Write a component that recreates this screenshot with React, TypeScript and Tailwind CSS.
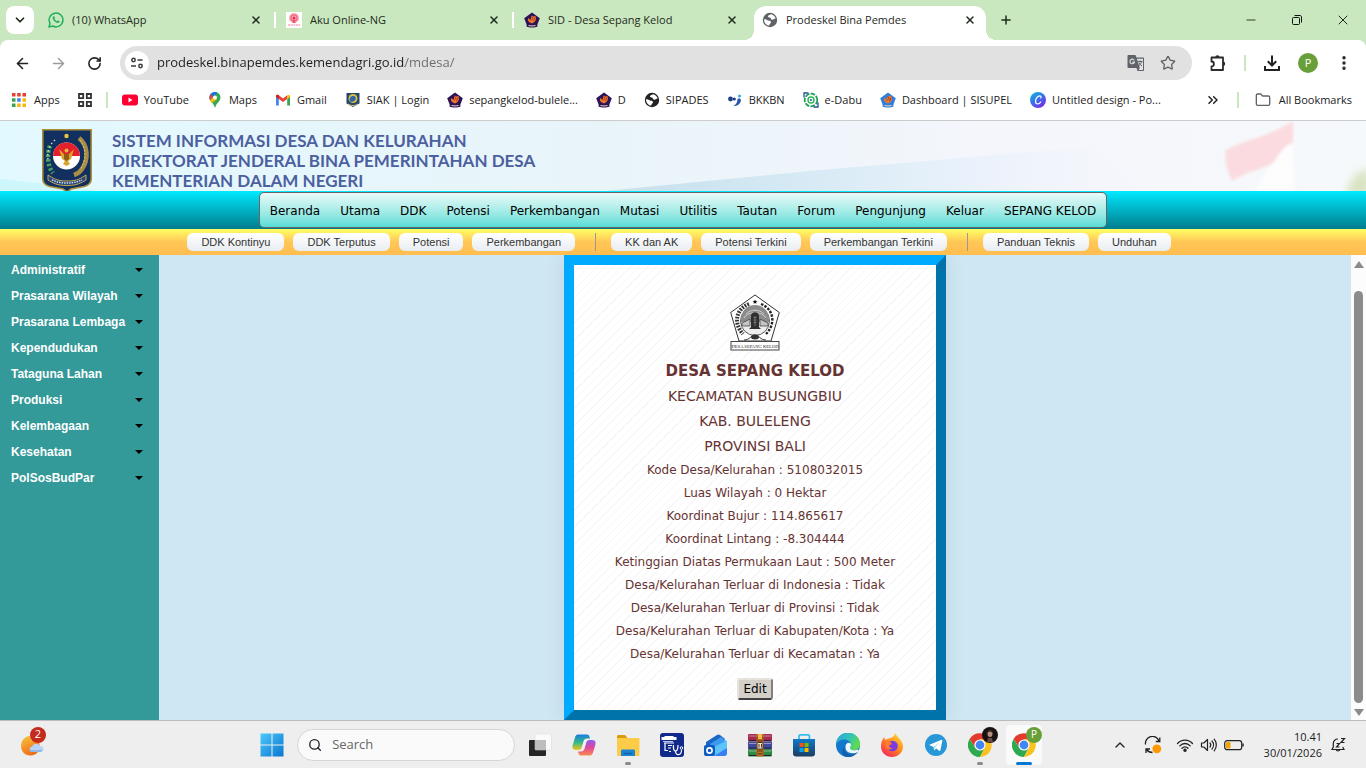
import type { ReactNode } from 'react';
import {
  ArrowLeft,
  ArrowRight,
  ChevronDown,
  ChevronUp,
  ChevronsRight,
  EllipsisVertical,
  Folder,
  Minus,
  Plus,
  RotateCw,
  Search,
  Star,
  X,
} from 'lucide-react';

/* ---------- Icons ---------- */

const WhatsAppIcon = () => (
  <svg viewBox="0 0 16 16" className="h-4 w-4 shrink-0">
    <path d="M1 15l1-3.700A6.900 6.900 0 1 1 4.700 14z" fill="none" stroke="#22b15c" strokeWidth="1.500" strokeLinejoin="round" />
    <path d="M5.500 4.300c.4-.2.8-.1 1 .4l.4 1c.1.3 0 .5-.5 1 .6 1.200 1.500 2 2.700 2.500.6-.7.8-.9 1.100-.8l1.200.6c.4.200.3.5.2.8-.3.900-1.400 1.300-2.200 1.100C7 10.300 5.300 8.500 4.700 6.600c-.2-.9.200-1.900.8-2.300z" fill="#22b15c" />
  </svg>
);

const RadioIcon = () => (
  <svg viewBox="0 0 16 16" className="h-4 w-4 shrink-0">
    <rect width="16" height="16" fill="#fff" />
    <circle cx="8" cy="6" r="5" fill="#f9a8b8" />
    <circle cx="8" cy="6" r="3.200" fill="none" stroke="#f0566f" />
    <circle cx="8" cy="6" r="1.500" fill="#e8334f" />
    <path d="M7.300 7h1.400l.8 4h-3z" fill="#f0566f" />
    <path d="M2 13h12" stroke="#f9a8b8" strokeWidth="1.500" strokeDasharray="2 .6" />
  </svg>
);

const RegencyIcon = ({ fill = '#2c1256' }: { fill?: string }) => (
  <svg viewBox="0 0 16 16" className="h-4 w-4 shrink-0">
    <path d="M8 .5L15.800 6.300 13.200 13H2.800L.2 6.300z" fill={fill} />
    <path d="M4.500 6L6.500 8l1-4.500 2 1L11.500 4l.5 3.500-1.500 2.500L8 11.500 5 10 3.800 8z" fill="#f0782a" />
    <path d="M7.500 4l1.300 2.500-1.800 2M11 5.500L9.500 9" stroke="#b5321b" fill="none" />
    <path d="M3 11.500c2 1.500 8 1.500 10 0l.5 3c-3 1.300-8 1.300-11 0z" fill={fill} />
    <path d="M4.500 13.500c2 .6 5 .6 7 0" stroke="#f6d9c4" strokeWidth="1" fill="none" />
  </svg>
);

const GlobeIcon = ({ fill }: { fill: string }) => (
  <svg viewBox="0 0 16 16" className="h-4 w-4 shrink-0">
    <circle cx="8" cy="8" r="7.200" fill={fill} />
    <path d="M2 7.500C3.500 7 4.700 8 6 8.500c1.300.4 2.600.1 3 1.500.3 1.300-1.600 1.500-1.700 3.300-.1.600-1.600.2-2.600-.6C3 11.500 2 9.500 2 7.500z" fill="#fff" />
    <path d="M9 2.300c-1.300.9-3.300.9-3.100 2.300.2 1 1.700.6 2.400 1.200.8.7.6 1.800 2 1.900 1.500.100 1.900-1.200 3.400-1.100C13 4.300 11.300 2.600 9 2.300z" fill="#fff" />
  </svg>
);

const AppsIcon = () => (
  <svg viewBox="0 0 14 14" className="h-3.5 w-3.5 shrink-0">
    <path d="M0 0h3.500v3.500H0zM5.200 0h3.500v3.500H5.200zM10.500 0H14v3.500h-3.500z" fill="#e8402f" />
    <path d="M0 5.200h3.500v3.500H0zM0 10.500h3.500V14H0z" fill="#35a452" />
    <path d="M5.200 5.200h3.500v3.500H5.200z" fill="#3d7ff0" />
    <path d="M10.500 5.200H14v3.500h-3.500zM5.200 10.500h3.500V14H5.200zM10.500 10.500H14V14h-3.500z" fill="#f8b90c" />
  </svg>
);

const TabGroupIcon = () => (
  <svg viewBox="0 0 14 14" className="h-3.5 w-3.5" fill="none" stroke="#333" strokeWidth="1.800">
    <path d="M1 1h4.200v4.200H1zM8.800 1H13v4.200H8.800zM1 8.800h4.200V13H1zM8.800 8.800H13V13H8.800z" />
  </svg>
);

const YouTubeIcon = () => (
  <svg viewBox="0 0 16 16" className="h-4 w-4 shrink-0">
    <rect y="2.500" width="16" height="11" rx="3" fill="#ff0033" />
    <path d="M6.500 5.600l4 2.400-4 2.400z" fill="#fff" />
  </svg>
);

const MapsIcon = () => (
  <svg viewBox="0 0 16 16" className="h-4 w-4 shrink-0">
    <path d="M8 0c3.100 0 5.500 2.400 5.500 5.500C13.500 9.500 9.500 10.500 8 16c-1.500-5.500-5.500-6.500-5.500-10.500C2.500 2.400 4.900 0 8 0z" fill="#34a853" />
    <path d="M3 8.200L10.500 .600C9.700.200 8.900 0 8 0 4.900 0 2.500 2.400 2.500 5.500c0 1 .2 1.900.5 2.700z" fill="#1a73e8" />
    <path d="M3.600 2.200l2.600 2L3 8.200C2.300 6.500 2.300 3.900 3.600 2.200z" fill="#ea4335" />
    <path d="M10 7.200L4.800 11.100C4 10.100 3.400 9.200 3 8.200l3.300-3.500z" fill="#fbbc04" />
    <circle cx="8" cy="5.500" r="2" fill="#fff" />
  </svg>
);

const GmailIcon = () => (
  <svg viewBox="0 0 16 16" className="h-4 w-4 shrink-0">
    <path d="M1 4v9.500h2.800V7z" fill="#4285f4" />
    <path d="M15 4v9.500h-2.800V7z" fill="#34a853" />
    <path d="M1 4.300l2.800 2.600L8 10l4.200-3.100V3.300L8 6.500 3.800 3.300C2.600 2.300 1 3 1 4.300z" fill="#ea4335" />
    <path d="M12.200 3.300v3.900L15 5V4.300c0-1.500-1.600-2-2.800-1z" fill="#fbbc04" />
    <path d="M1 4.300V5l2.800 2.200V3.300C2.600 2.300 1 2.800 1 4.300z" fill="#c5221f" />
  </svg>
);

const SiakIcon = () => (
  <svg viewBox="0 0 16 16" className="h-4 w-4 shrink-0">
    <path d="M1.500 1h13v10.500L8 15l-6.500-3.500z" fill="#24456e" />
    <circle cx="8" cy="6.500" r="4.500" fill="#e3c33c" />
    <path d="M4.500 7c1-3 4-4 5.500-2.500s1 4-1.500 5-4 0-4-2.500z" fill="#2f66a8" />
    <path d="M3 12c3 2 7 2 10 0" stroke="#ddd07a" fill="none" />
  </svg>
);

const BkkbnIcon = () => (
  <svg viewBox="0 0 16 16" className="h-4 w-4 shrink-0">
    <circle cx="3.500" cy="7" r="2.400" fill="#1c3f86" />
    <circle cx="7.300" cy="7" r="1.600" fill="#1c3f86" />
    <path d="M10.500 7c3-1.500 4.500 1 2.500 4-1.500 2.200-4 3.200-6.500 2.800 2.500-1.300 4-3.500 4-6.800z" fill="#2459a8" />
    <circle cx="12.500" cy="4" r="1.600" fill="#36b0e0" />
  </svg>
);

const DabuIcon = () => (
  <svg viewBox="0 0 16 16" className="h-4 w-4 shrink-0" fill="none">
    <circle cx="8" cy="8" r="6.300" stroke="#1e9e5b" strokeWidth="1.800" strokeDasharray="4.500 1.200" />
    <path d="M1 5.500V1h4.500M10.500 15H15v-4.500" stroke="#20519e" strokeWidth="1.300" />
    <circle cx="8" cy="8" r="3" stroke="#2fb457" strokeWidth="1.500" />
    <circle cx="8" cy="8" r="1" fill="#20519e" />
  </svg>
);

const CanvaIcon = () => (
  <svg viewBox="0 0 16 16" className="h-4 w-4 shrink-0">
    <defs>
      <linearGradient id="canva" x1="0" y1="0" x2=".7" y2="1">
        <stop offset="0" stopColor="#06c1ce" />
        <stop offset=".55" stopColor="#3a6df0" />
        <stop offset="1" stopColor="#7d2ae8" />
      </linearGradient>
    </defs>
    <circle cx="8" cy="8" r="8" fill="url(#canva)" />
    <path d="M10.800 6c.6-1 .2-2.200-1-2.200-2.200 0-4.300 3-4.300 5.500 0 1.700.8 2.700 2.200 2.700 1.300 0 2.400-.9 3-2" stroke="#fff" strokeWidth="1.200" fill="none" strokeLinecap="round" />
  </svg>
);

const TuneIcon = () => (
  <svg viewBox="0 0 16 16" className="h-4 w-4" fill="none" stroke="#3a3a3a" strokeWidth="1.500">
    <circle cx="4.500" cy="5" r="1.700" />
    <path d="M8.500 5h5M2 11h5" />
    <circle cx="11.500" cy="11" r="1.700" />
  </svg>
);

const TranslateIcon = () => (
  <svg viewBox="0 0 18 18" className="h-4.5 w-4.5">
    <path d="M1.500 1h7l1 2.500H16c.6 0 1 .4 1 1V16c0 .6-.4 1-1 1h-5.500l-1-3h-8c-.6 0-1-.4-1-1V2c0-.6.4-1 1-1z" fill="#5f6368" />
    <path d="M9.900 4.700H16V16h-4.500l1.300-2z" fill="#e1e1e1" />
    <path d="M11 7.500h4.500M13.200 6.500v1M14.500 7.500c-.3 1.800-1.300 3-2.500 4M12 8.500c.6 1.500 1.700 2.700 3 3.500" stroke="#5f6368" fill="none" />
    <path d="M7.200 6.200A2.300 2.300 0 1 0 7.500 8H5.200" stroke="#e1e1e1" strokeWidth="1.100" fill="none" />
  </svg>
);

const ExtensionIcon = () => (
  <svg viewBox="0 0 18 18" className="h-4.5 w-4.5">
    <path
      d="M2.500 3.500H14V16H2.500v-3.700a2.200 2.200 0 0 0 0-4.800z"
      fill="none"
      stroke="#2b2b2b"
      strokeWidth="1.800"
      strokeLinejoin="round"
    />
    <path d="M6.200 3.500a2.200 2.200 0 0 1 4.400 0zM14 7.600a2.200 2.200 0 0 1 0 4.400z" fill="#2b2b2b" />
  </svg>
);

const DownloadIcon = () => (
  <svg viewBox="0 0 18 18" className="h-4.5 w-4.5" fill="none" stroke="#222" strokeWidth="2">
    <path d="M9 1.500v9.500M4.800 7.300L9 11.500l4.200-4.200M2 12v4h14v-4" />
  </svg>
);

const RestoreIcon = () => (
  <svg viewBox="0 0 10 10" className="h-2.5 w-2.5" fill="none" stroke="#111">
    <rect x=".5" y="2.500" width="7" height="7" rx="1" />
    <path d="M2.500 .5H8c.8 0 1.500.7 1.500 1.500v5.500" />
  </svg>
);

const MinistryEmblem = () => (
  <svg viewBox="0 0 50 62" className="h-[62px] w-[50px] shrink-0" role="img" aria-label="Kementerian Dalam Negeri">
    <path d="M.8.800h48.400V50c0 4-3 6.500-7 7.500L29 60l-4 3-4-3-13.200-2.500c-4-1-7-3.500-7-7.500z" fill="#12305f" stroke="#a98f3c" strokeWidth="1.600" />
    <path d="M8 17c-3 6-3 20 3 27" stroke="#47a35e" strokeWidth="4.500" strokeDasharray="2.500 2" fill="none" />
    <path d="M13 11c-6 5-8 13-7 20" stroke="#c8e0cf" strokeWidth="1.500" strokeDasharray="1.500 2.500" fill="none" />
    <path d="M37 9c9 7 10 21 3 31-2 3-5 5-8 6" stroke="#a88d45" strokeWidth="4.500" fill="none" />
    <path d="M38 11c6 8 7 20 0 30" stroke="#dcc67c" strokeWidth="1" strokeDasharray="2 1.500" fill="none" />
    <circle cx="24.500" cy="27" r="13.500" fill="#fff" />
    <path d="M11 27a13.500 13.500 0 0 1 27 0z" fill="#e3202b" />
    <path d="M17 20l3 10 3 2-2 3 3.500 2 3.500-2-2-3 3-2 3-10-5 5h-5z" fill="#d7a52c" />
    <path d="M22 25h5v5l-2.500 2-2.500-2z" fill="#8f5d16" />
    <circle cx="24.500" cy="21.500" r="2" fill="#e3b63e" />
    <circle cx="24.500" cy="7" r="2.200" fill="#eec341" />
    <path d="M6 46c5 3 8 6 19 6s14-3 19-6v5c-5 3-9 5.500-19 5.500S11 54 6 51z" fill="#27477c" stroke="#c6a852" />
    <path d="M10 51c9 4 21 4 30 0" stroke="#d8dfec" strokeWidth="1.500" strokeDasharray="1.500 1" fill="none" />
  </svg>
);

const VillageEmblem = () => (
  <svg viewBox="0 0 50 58" className="h-[58px] w-[50px]" role="img" aria-label="Desa Sepang Kelod">
    <path d="M25 1L49.300 18.500 41 47H9L.7 18.500z" fill="#fff" stroke="#333" />
    <circle cx="25" cy="27" r="14.500" fill="#eee" stroke="#333" strokeWidth=".8" />
    <path d="M11 25a14 14 0 0 1 28 0v3H11z" fill="#8c8c8c" />
    <path d="M14 24c3-7 19-7 22 0M16 20c4-5 14-5 18 0" stroke="#ddd" strokeWidth=".8" fill="none" />
    <path d="M12 29l8-4v7h-8zM38 29l-8-4v7h8z" fill="#c5c5c5" stroke="#444" strokeWidth=".8" />
    <path d="M21 33V22c0-5 8-5 8 0v11l2 2H19z" fill="#303030" />
    <path d="M23.500 23.500h3M23.500 26h3M23.500 28.500h3M25 22v10" stroke="#999" strokeWidth=".6" />
    <path d="M19 10C6 15 3 29 13 40" stroke="#333" strokeWidth="4" strokeDasharray="1.800 1.200" fill="none" />
    <path d="M31 10c13 5 15 20 5 30" stroke="#222" strokeWidth="2.400" strokeDasharray="2.500 1.300" fill="none" />
    <path d="M25 5.500l.7 1.500 1.600.1-1.200 1.100.4 1.600-1.500-.9-1.500.9.4-1.600-1.200-1.100 1.600-.1z" fill="#111" />
    <path d="M14 46c6 0 7-5 11-5s5 5 11 5" stroke="#333" fill="none" />
    <ellipse cx="25" cy="43" rx="4" ry="2.500" fill="#333" />
    <rect x="1" y="47.500" width="48" height="8.500" fill="#fff" stroke="#444" />
    <text x="25" y="53.500" textAnchor="middle" fontFamily="Liberation Serif, serif" fontSize="4.600" fill="#222">
      DESA SEPANG KELOD
    </text>
  </svg>
);

const HeaderBackdrop = () => (
  <svg viewBox="0 0 1366 70" preserveAspectRatio="none" className="absolute inset-0 h-full w-full" aria-hidden="true">
    <defs>
      <linearGradient id="sky" x1="0" y1="0" x2="1" y2="0">
        <stop offset="0" stopColor="#e2f9ff" />
        <stop offset=".45" stopColor="#e9f4f9" />
        <stop offset=".75" stopColor="#f5f6fc" />
        <stop offset="1" stopColor="#f6f9fb" />
      </linearGradient>
      <linearGradient id="hill" x1="0" y1="0" x2="1" y2="0">
        <stop offset="0" stopColor="#c6e0ec" />
        <stop offset=".3" stopColor="#d3e8f3" />
        <stop offset=".65" stopColor="#e8f1fb" />
        <stop offset="1" stopColor="#f3f4fc" stopOpacity="0" />
      </linearGradient>
      <filter id="soft">
        <feGaussianBlur stdDeviation="1.500" />
      </filter>
      <filter id="haze" x="-1" y="-1" width="3" height="3">
        <feGaussianBlur stdDeviation="5" />
      </filter>
    </defs>
    <rect width="1366" height="70" fill="url(#sky)" />
    <path d="M0 58c40 4 70 8 100 12H0z" fill="#cdf7fd" />
    <path d="M605 70L820 49l270-23 60 44z" fill="url(#hill)" />
    <g filter="url(#soft)">
      <path d="M1226 29c18-10 40-12 67-29v22c-10 2-14 14-21 21-14 6-26 8-40 17-5-10-8-21-6-31z" fill="#fbdbdf" />
      <path d="M1293 22c-10 2-14 14-21 21l-18 27h40z" fill="#fdfdfe" />
    </g>
    <path d="M1346 76c2-16 10-26 24-28v28z" fill="#d7e3c0" filter="url(#haze)" />
  </svg>
);

const ChromeIcon = () => (
  <svg viewBox="0 0 24 24" className="h-6 w-6">
    <path d="M12 6.500h10.400A12 12 0 0 0 1.600 6l5.600 8.750z" fill="#e33b2e" />
    <path d="M7.200 14.750L1.600 6A12 12 0 0 0 12 24l4.800-9.250z" fill="#2da94f" />
    <path d="M12 6.500h10.400A12 12 0 0 1 12 24l4.800-9.250z" fill="#fcc31e" />
    <circle cx="12" cy="12" r="5.600" fill="#fff" />
    <circle cx="12" cy="12" r="4.400" fill="#4285f4" />
  </svg>
);

const WeatherIcon = () => (
  <svg viewBox="0 0 24 24" className="h-6 w-6">
    <defs>
      <linearGradient id="moon" x1="0" y1="0" x2=".4" y2="1">
        <stop offset="0" stopColor="#f7c63b" />
        <stop offset="1" stopColor="#f0701c" />
      </linearGradient>
    </defs>
    <path d="M10 3C5 3 1 7.500 1 13s4 9.500 9 9.500c4 0 7.500-2 9-5z" fill="url(#moon)" />
    <path d="M10 3c5 0 9 3 9.500 8v6H10z" fill="url(#moon)" />
    <path d="M11 19a3 3 0 0 1 1-5.500 4.500 4.500 0 0 1 8-.5 3 3 0 0 1 1 6z" fill="#b9d3f5" />
    <path d="M11 19a3 3 0 0 1-1.500-2.500c3 1 8 1 12.500 0-.2 1.500-.6 2-1 2.500z" fill="#8fb4ea" />
  </svg>
);

const StartIcon = () => (
  <svg viewBox="0 0 24 24" className="h-6 w-6">
    <defs>
      <linearGradient id="win" x1="0" y1="0" x2="1" y2="1">
        <stop offset="0" stopColor="#4cc9fb" />
        <stop offset="1" stopColor="#0a75d0" />
      </linearGradient>
    </defs>
    <path d="M.5.500h11v11H.5zM12.500.500h11v11h-11zM.5 12.500h11v11H.5zM12.500 12.500h11v11h-11z" fill="url(#win)" />
  </svg>
);

const TaskViewIcon = () => (
  <svg viewBox="0 0 24 24" className="h-6 w-6">
    <rect x="1" y="7" width="17" height="16" rx="1" fill="#252525" />
    <rect x="7" y="1" width="16.500" height="16" rx="1" fill="#fafafa" stroke="#d8d8d8" strokeWidth=".5" />
    <path d="M7 7h11v10H7z" fill="#bdbdbd" />
  </svg>
);

const CopilotIcon = () => (
  <svg viewBox="0 0 24 24" className="h-6 w-6">
    <defs>
      <linearGradient id="copA" x1="0" y1="0" x2="0" y2="1">
        <stop offset="0" stopColor="#1b7be0" />
        <stop offset=".5" stopColor="#2fb98a" />
        <stop offset="1" stopColor="#f4c51c" />
      </linearGradient>
      <linearGradient id="copB" x1="0" y1="0" x2="0" y2="1">
        <stop offset="0" stopColor="#8c5cf0" />
        <stop offset=".5" stopColor="#e0489a" />
        <stop offset="1" stopColor="#fb8a4c" />
      </linearGradient>
    </defs>
    <path d="M6 1.500h9c2 0 2.500 2 3 4h-3c-2 0-3 1-3.500 3L10 14c-.6 2-1.500 3-3.500 3H4c-4 0-4-3-3-6l2-6.500c.6-2 1.500-3 3-3z" fill="url(#copA)" />
    <path d="M18 22.500H9c-2 0-2.500-2-3-4h3c2 0 3-1 3.500-3L14 10c.6-2 1.500-3 3.500-3H20c4 0 4 3 3 6l-2 6.500c-.6 2-1.500 3-3 3z" fill="url(#copB)" />
    <path d="M11.500 9c.5-1.500 1.500-2.200 3-2.200h1.500c-1 .6-1.500 1.700-2 3.200l-1.500 5c-.5 1.500-1.500 2.200-3 2.200H8c1-.5 1.600-1.700 2-3.200z" fill="#eef0f6" />
  </svg>
);

const ExplorerIcon = () => (
  <svg viewBox="0 0 24 24" className="h-6 w-6">
    <path d="M1 3.500C1 2.500 1.500 2 2.500 2H9l2.500 3H1z" fill="#d99a0c" />
    <path d="M1 5h21.500c.6 0 1 .4 1 1v15.500c0 .8-.5 1.500-1.500 1.500H2.500C1.500 23 1 22.500 1 21.500z" fill="#fccb47" />
    <path d="M5 23v-5c0-1 .6-1.500 1.500-1.500h11c1 0 1.500.5 1.500 1.500v5z" fill="#1b83d0" />
    <path d="M8 20.500h8" stroke="#0c5ea8" strokeWidth="1.200" />
  </svg>
);

const ClinicIcon = () => (
  <svg viewBox="0 0 24 24" className="h-6 w-6">
    <rect width="24" height="24" rx="3" fill="#12298c" />
    <path d="M1.500 4h3V3h9v1h3v3H1.500z" fill="#fff" />
    <path d="M3 8.500h10" stroke="#b9c6f2" />
    <path d="M4 10h10M5 10v7.500h3" stroke="#fff" strokeWidth="1.200" fill="none" />
    <path d="M8 12.500h4M8 15h3M9 18.500h2" stroke="#fff" strokeWidth="1.200" />
    <path d="M13.500 12c-.5 4 .5 6 2 6s2.500-2 2.500-6M15.500 18c0 5 6 5 6-1" stroke="#fff" strokeWidth="1.200" fill="none" />
    <circle cx="21.500" cy="15" r="1.300" stroke="#fff" fill="none" />
  </svg>
);

const OutlookIcon = () => (
  <svg viewBox="0 0 24 24" className="h-6 w-6">
    <path d="M2 9L13 2c1-.7 2-.7 3 0l5 4-9 12-10-4z" fill="#1766c8" />
    <path d="M6 11L17 4l5 4v6l-8 7z" fill="#3b9bf0" />
    <path d="M8 15l15-7.500V20c0 2-1 3-3 3h-8c-2 0-4-1-4-3z" fill="#5cc4fb" />
    <path d="M10 23l13-8v5c0 2-1 3-3 3z" fill="#3a7ff2" />
    <rect x="0" y="12" width="11" height="11" rx="2" fill="#0f5bc4" />
    <circle cx="5.500" cy="17.500" r="2.600" fill="none" stroke="#fff" strokeWidth="1.600" />
  </svg>
);

const WinrarIcon = () => (
  <svg viewBox="0 0 24 24" className="h-6 w-6">
    <rect y="1" width="24" height="7.500" rx="1" fill="#a52a4a" />
    <rect y="8.500" width="24" height="7.500" fill="#3f4a9c" />
    <rect y="16" width="24" height="7.500" rx="1" fill="#2f8a44" />
    <path d="M1 3h22M1 10.500h22M1 18h22" stroke="#d9c9d6" strokeWidth=".6" />
    <path d="M1 7.500h22M1 15h22M1 22.500h22" stroke="#2b1a35" strokeWidth="1" />
    <rect x="8.500" y="1" width="7" height="22.500" fill="#b56a24" />
    <path d="M9 5h6M9 8h6M9 18h6M9 21h6" stroke="#6e3c10" />
    <rect x="9" y="9.500" width="6" height="6.500" rx="1" fill="#e7e2da" stroke="#54331a" />
    <path d="M11 11v3.500M13.500 11v3.500" stroke="#54331a" />
    <rect x="10" y="1" width="4" height="5" fill="#f2b84b" />
  </svg>
);

const StoreIcon = () => (
  <svg viewBox="0 0 24 24" className="h-6 w-6">
    <defs>
      <linearGradient id="bag" x1="0" y1="0" x2="0" y2="1">
        <stop offset="0" stopColor="#0f7ac9" />
        <stop offset="1" stopColor="#1c3c62" />
      </linearGradient>
    </defs>
    <path d="M7 6.500V3c0-.8.500-1.200 1.200-1.200h8c.8 0 1.200.4 1.200 1.200v3.500" stroke="#38bdf2" strokeWidth="1.800" fill="none" />
    <path d="M1 6h22v14.500c0 2-1 3-3 3H4c-2 0-3-1-3-3z" fill="url(#bag)" />
    <path d="M7.500 10h4v4h-4z" fill="#f25022" />
    <path d="M12.500 10h4v4h-4z" fill="#7fba00" />
    <path d="M7.500 15h4v4h-4z" fill="#00a4ef" />
    <path d="M12.500 15h4v4h-4z" fill="#ffb900" />
  </svg>
);

const EdgeIcon = () => (
  <svg viewBox="0 0 24 24" className="h-6 w-6">
    <defs>
      <linearGradient id="edgeTop" x1="0" y1="0" x2="1" y2=".4">
        <stop offset="0" stopColor="#2aa7e0" />
        <stop offset=".6" stopColor="#35c3b5" />
        <stop offset="1" stopColor="#5fdc4c" />
      </linearGradient>
    </defs>
    <circle cx="12" cy="12" r="12" fill="#1278cc" />
    <path d="M0 12A12 12 0 0 1 24 11c0 4-2.500 6-6 6-3 0-4-1-4-2s1-1.500 1-3.500C15 9 12 6.500 8.500 6.500 4 6.500.6 9 0 12z" fill="url(#edgeTop)" />
    <path d="M9.500 14c0-2.500 1.300-4.200 3.300-4.200 1.300 0 2.200.9 2.200 2 0 1.500-1 2-1 3.200s1.500 2.300 4 2.300c1.700 0 3-.4 4-.8l.8.500-.800 2c-1 1-2.500 1.200-5 1.200-5 0-7.500-2.200-7.500-6.200z" fill="#eef6fa" />
    <path d="M8.500 13c-1.500 5.500 3 9 8 8.500 2.500-.6 4-1.500 5.500-3A12 12 0 0 1 12 24c-6 0-7.500-6-3.500-11z" fill="#155ea8" />
  </svg>
);

const FirefoxIcon = () => (
  <svg viewBox="0 0 24 24" className="h-6 w-6">
    <defs>
      <linearGradient id="fox" x1=".9" y1="0" x2=".2" y2="1">
        <stop offset="0" stopColor="#ffe03a" />
        <stop offset=".5" stopColor="#ff8a1e" />
        <stop offset="1" stopColor="#f4235f" />
      </linearGradient>
    </defs>
    <path d="M15.500 0c.5 3 3 4 5 7 1.500 2 2.500 4 2.500 6.500C23 19.500 18 24 12 24S1 19.500 1 13.500C1 9.500 2 6.500 4.500 4c0 1.500.5 2.500 1 3 1-1 2.500-1.500 4-1.500C11.500 5 14.500 3 15.500 0z" fill="url(#fox)" />
    <circle cx="12.500" cy="13" r="5.300" fill="#7a3be0" />
    <path d="M6 9.500c2-1 4-1 5.500.5 1 1-.5 2-2 2-1 1.500.5 3.500 3 3-1.500 2-5 2-6.500-.5C5 13 5 11 6 9.500z" fill="#ff7a2a" />
  </svg>
);

const TelegramIcon = () => (
  <svg viewBox="0 0 24 24" className="h-6 w-6">
    <circle cx="12" cy="12" r="11" fill="#2797d8" />
    <path d="M5 12l12.500-5.200c.6-.2 1 .1.900.8l-2 9.700c-.1.700-.6.900-1.200.5l-3-2.200-1.600 1.500c-.3.300-.6.200-.6-.2l-.400-3z" fill="#fff" />
    <path d="M9.700 14l6-5.500-4.500 6.200-.8 2.300z" fill="#b9dcf2" />
  </svg>
);

const SyncIcon = () => (
  <svg viewBox="0 0 18 18" className="h-4.5 w-4.5" fill="none" stroke="#222" strokeWidth="1.300">
    <path d="M1.500 8.500A7 7 0 0 1 15 5M15.800 1.500V5.500h-4M2 17v-4h4M2.500 13.500c1.500 2 3.500 3 6 3" />
    <circle cx="12.800" cy="12.800" r="4.400" fill="#ff9800" stroke="none" />
  </svg>
);

const WifiIcon = () => (
  <svg viewBox="0 0 18 18" className="h-4.5 w-4.5" fill="none" stroke="#222" strokeWidth="1.300" strokeLinecap="round">
    <path d="M1.500 7.500c4-4.500 11-4.500 15 0M3.800 9.900c3-3.200 7.400-3.200 10.400 0M6 12.200c1.700-1.800 4.300-1.800 6 0" />
    <circle cx="9" cy="14.200" r="1.100" fill="#222" />
  </svg>
);

const VolumeIcon = () => (
  <svg viewBox="0 0 18 18" className="h-4.5 w-4.5" fill="none" stroke="#222" strokeWidth="1.200" strokeLinecap="round" strokeLinejoin="round">
    <path d="M1.500 7h2.300L7.500 3.500v11L3.800 11H1.500zM10 7c1 1.200 1 2.800 0 4M12 5c2 2.300 2 5.700 0 8M14.200 3.200c2.800 3.300 2.800 8.300 0 11.600" />
  </svg>
);

const BatteryIcon = () => (
  <svg viewBox="0 0 20 12" className="h-3 w-5" fill="none">
    <rect x=".7" y="1.700" width="17" height="9" rx="2.500" stroke="#222" strokeWidth="1.200" />
    <rect x="2" y="3" width="4.500" height="6.500" rx="1" fill="#f0a400" />
    <path d="M19 4.500v3" stroke="#222" strokeWidth="1.400" />
  </svg>
);

const BellIcon = () => (
  <svg viewBox="0 0 16 16" className="h-4 w-4" fill="none" stroke="#222" strokeWidth="1.200">
    <path d="M8 2C5 2 3.300 4 3.300 6.500V10L2 12.500h12L12.700 10M6.300 13c.2 1.200 3.200 1.200 3.400 0" />
    <path d="M6.500 6.500h3l-3 3.500h3M11 1.500h3.500L11 5.500h3.500" />
  </svg>
);

/* ---------- Data ---------- */

const tabs = [
  { title: '(10) WhatsApp', icon: <WhatsAppIcon />, divider: true },
  { title: 'Aku Online-NG', icon: <RadioIcon />, divider: true },
  { title: 'SID - Desa Sepang Kelod', icon: <RegencyIcon />, divider: false },
];

const bookmarks = [
  { title: 'YouTube', icon: <YouTubeIcon /> },
  { title: 'Maps', icon: <MapsIcon /> },
  { title: 'Gmail', icon: <GmailIcon /> },
  { title: 'SIAK | Login', icon: <SiakIcon /> },
  { title: 'sepangkelod-bulele...', icon: <RegencyIcon /> },
  { title: 'D', icon: <RegencyIcon /> },
  { title: 'SIPADES', icon: <GlobeIcon fill="#222" /> },
  { title: 'BKKBN', icon: <BkkbnIcon /> },
  { title: 'e-Dabu', icon: <DabuIcon /> },
  { title: 'Dashboard | SISUPEL', icon: <RegencyIcon fill="#2f7fd6" /> },
  { title: 'Untitled design - Po...', icon: <CanvaIcon /> },
];

const mainMenu = [
  'Beranda', 'Utama', 'DDK', 'Potensi', 'Perkembangan', 'Mutasi',
  'Utilitis', 'Tautan', 'Forum', 'Pengunjung', 'Keluar', 'SEPANG KELOD',
];

const shortcutGroups = [
  ['DDK Kontinyu', 'DDK Terputus', 'Potensi', 'Perkembangan'],
  ['KK dan AK', 'Potensi Terkini', 'Perkembangan Terkini'],
  ['Panduan Teknis', 'Unduhan'],
];

const sideMenu = [
  'Administratif', 'Prasarana Wilayah', 'Prasarana Lembaga', 'Kependudukan',
  'Tataguna Lahan', 'Produksi', 'Kelembagaan', 'Kesehatan', 'PolSosBudPar',
];

const villageFacts = [
  'Kode Desa/Kelurahan : 5108032015',
  'Luas Wilayah : 0 Hektar',
  'Koordinat Bujur : 114.865617',
  'Koordinat Lintang : -8.304444',
  'Ketinggian Diatas Permukaan Laut : 500 Meter',
  'Desa/Kelurahan Terluar di Indonesia : Tidak',
  'Desa/Kelurahan Terluar di Provinsi : Tidak',
  'Desa/Kelurahan Terluar di Kabupaten/Kota : Ya',
  'Desa/Kelurahan Terluar di Kecamatan : Ya',
];

const taskbarApps = [
  { name: 'Task view', icon: <TaskViewIcon /> },
  { name: 'Copilot', icon: <CopilotIcon /> },
  { name: 'File Explorer', icon: <ExplorerIcon />, running: true },
  { name: 'Klinik', icon: <ClinicIcon /> },
  { name: 'Outlook', icon: <OutlookIcon /> },
  { name: 'WinRAR', icon: <WinrarIcon /> },
  { name: 'Microsoft Store', icon: <StoreIcon /> },
  { name: 'Edge', icon: <EdgeIcon /> },
  { name: 'Firefox', icon: <FirefoxIcon /> },
  { name: 'Telegram', icon: <TelegramIcon /> },
];

/* ---------- Browser ---------- */

const IconButton = ({ label, children }: { label: string; children: ReactNode }) => (
  <button type="button" aria-label={label} className="flex h-7 w-7 shrink-0 items-center justify-center text-[#222]">
    {children}
  </button>
);

const TabStrip = () => (
  <div className="flex h-10 items-center pl-1.5 text-[11px] text-[#1f2a1c]">
    <button type="button" aria-label="Search tabs" className="mr-1.5 flex h-7 w-7 shrink-0 items-center justify-center rounded-lg bg-white">
      <ChevronDown size={14} strokeWidth={3} />
    </button>
    {tabs.map((tab) => (
      <div key={tab.title} className="flex w-[238px] items-center gap-2 pl-2">
        {tab.icon}
        <span className="flex-1 truncate">{tab.title}</span>
        <button type="button" aria-label={`Close ${tab.title}`} className="mr-0.5 flex h-4 w-4 items-center justify-center">
          <X size={12} strokeWidth={3} />
        </button>
        <span className={tab.divider ? 'mr-0.5 h-4 w-0.5 bg-white' : 'mr-0.5 h-4 w-0.5'} />
      </div>
    ))}
    <div className="relative flex h-[34px] w-[232px] items-center gap-2 self-end rounded-t-xl bg-white px-2">
      <span className="absolute -left-2.5 bottom-0 h-2.5 w-2.5 bg-[radial-gradient(circle_at_0_0,transparent_10px,#fff_10px)]" />
      <span className="absolute -right-2.5 bottom-0 h-2.5 w-2.5 bg-[radial-gradient(circle_at_100%_0,transparent_10px,#fff_10px)]" />
      <div className="flex flex-1 items-center gap-2 pb-1.5">
        <GlobeIcon fill="#5f6368" />
        <span className="flex-1 truncate">Prodeskel Bina Pemdes</span>
        <button type="button" aria-label="Close Prodeskel Bina Pemdes" className="flex h-4 w-4 items-center justify-center">
          <X size={12} strokeWidth={3} />
        </button>
      </div>
    </div>
    <button type="button" aria-label="New tab" className="ml-3 flex h-4 w-4 items-center justify-center">
      <Plus size={14} strokeWidth={2.5} />
    </button>
    <div className="ml-auto flex items-center">
      <button type="button" aria-label="Minimize" className="flex h-10 w-[46px] items-center justify-center">
        <Minus size={14} strokeWidth={1.5} />
      </button>
      <button type="button" aria-label="Restore" className="flex h-10 w-[46px] items-center justify-center">
        <RestoreIcon />
      </button>
      <button type="button" aria-label="Close" className="flex h-10 w-[46px] items-center justify-center">
        <X size={16} strokeWidth={1.5} />
      </button>
    </div>
  </div>
);

const Toolbar = () => (
  <div className="flex h-[46px] items-center gap-2 rounded-t-lg bg-white px-2">
    <IconButton label="Back"><ArrowLeft size={17} strokeWidth={2.25} /></IconButton>
    <button type="button" aria-label="Forward" className="flex h-7 w-7 shrink-0 items-center justify-center text-[#9b9b9b]">
      <ArrowRight size={17} />
    </button>
    <IconButton label="Reload"><RotateCw size={15} strokeWidth={2.5} /></IconButton>
    <div className="ml-1 flex h-[34px] flex-1 items-center rounded-full bg-[#e1e1e1] pl-[5px] pr-2.5">
      <button type="button" aria-label="Site information" className="flex h-6 w-6 shrink-0 items-center justify-center rounded-full bg-white">
        <TuneIcon />
      </button>
      <input
        type="text"
        aria-label="Address"
        defaultValue="prodeskel.binapemdes.kemendagri.go.id/mdesa/"
        className="ml-2 min-w-0 flex-1 bg-[linear-gradient(to_right,#1f1f1f_248px,#6b6b6b_248px)] bg-clip-text text-[13px] text-transparent outline-none"
      />
      <IconButton label="Translate this page"><TranslateIcon /></IconButton>
      <button type="button" aria-label="Bookmark this page" className="ml-1 flex h-7 w-7 items-center justify-center text-[#5f6368]">
        <Star size={16} />
      </button>
    </div>
    <div className="ml-1 flex items-center gap-2">
      <IconButton label="Extensions"><ExtensionIcon /></IconButton>
      <span className="mx-1 h-4 w-0.5 bg-[#c9e8bf]" />
      <IconButton label="Downloads"><DownloadIcon /></IconButton>
      <button type="button" aria-label="Profile P" className="flex h-7 w-7 items-center justify-center">
        <span className="flex h-5 w-5 items-center justify-center rounded-full bg-[#689f38] text-[11px] text-white">P</span>
      </button>
      <IconButton label="Menu"><EllipsisVertical size={18} strokeWidth={2.5} /></IconButton>
    </div>
  </div>
);

const BookmarksBar = () => (
  <nav className="flex h-[35px] items-center border-b border-[#cccccc] bg-white pb-1.5 pl-3 pr-3.5 text-[11px] text-[#222]">
    <a href="#apps" className="flex items-center gap-2">
      <AppsIcon />
      Apps
    </a>
    <button type="button" aria-label="Tab groups" className="ml-[18px] shrink-0"><TabGroupIcon /></button>
    <span className="mx-3.5 h-4 w-0.5 shrink-0 bg-[#c9e8bf]" />
    <div className="flex items-center gap-[18px] whitespace-nowrap">
      {bookmarks.map((item) => (
        <a key={item.title} href="#bookmark" className="flex items-center gap-1.5">
          {item.icon}
          {item.title}
        </a>
      ))}
    </div>
    <div className="ml-auto flex shrink-0 items-center gap-4">
      <button type="button" aria-label="More bookmarks"><ChevronsRight size={16} strokeWidth={2.25} /></button>
      <span className="h-4 w-0.5 bg-[#c9e8bf]" />
      <button type="button" className="flex items-center gap-2">
        <Folder size={16} className="text-[#5f6368]" />
        All Bookmarks
      </button>
    </div>
  </nav>
);

/* ---------- Site ---------- */

const SiteHeader = () => (
  <header className="relative flex h-[70px] shrink-0 items-start gap-5 overflow-hidden pl-[42px] pt-2">
    <HeaderBackdrop />
    <div className="relative"><MinistryEmblem /></div>
    <h1 className="relative pt-0.5 font-['Lato',sans-serif] text-[17px] font-bold leading-5 text-[#4c5f9f]">
      <span className="block">SISTEM INFORMASI DESA DAN KELURAHAN</span>
      <span className="block">DIREKTORAT JENDERAL BINA PEMERINTAHAN DESA</span>
      <span className="block">KEMENTERIAN DALAM NEGERI</span>
    </h1>
  </header>
);

const MainMenu = () => (
  <nav className="flex h-[38px] shrink-0 items-center justify-center bg-linear-to-b from-[#00eaff] to-[#007d8e]">
    <ul className="flex h-9 items-center rounded-[5px] border border-[#666] bg-linear-to-b from-[#e9faf9] to-[#55ddd6] pt-0.5 font-['DejaVu_Sans',sans-serif] text-xs text-black">
      {mainMenu.map((label) => (
        <li key={label}>
          <a href="#menu" className="block whitespace-nowrap px-2.5">{label}</a>
        </li>
      ))}
    </ul>
  </nav>
);

const Shortcuts = () => (
  <nav className="flex h-[26px] shrink-0 items-center justify-center bg-linear-to-b from-[#ffff66] via-[#ffc656] via-50% to-[#ffbe4f] pr-2 font-['Liberation_Sans',sans-serif] text-[11px] text-[#333]">
    {shortcutGroups.map((group, index) => (
      <div key={group[0]} className="flex items-center">
        {index > 0 && <span className="ml-5 mr-[15px] h-[18px] w-px bg-[#999]" />}
        <div className="flex gap-[9px]">
          {group.map((label) => (
            <a key={label} href="#shortcut" className="flex h-[18px] items-center whitespace-nowrap rounded-md bg-linear-to-b from-white to-[#e9edf1] px-3.5">
              {label}
            </a>
          ))}
        </div>
      </div>
    ))}
  </nav>
);

const Sidebar = () => (
  <aside className="w-[159px] shrink-0 bg-[#339999] pt-0.5">
    <ul className="font-['Liberation_Sans',sans-serif] text-xs font-bold text-white">
      {sideMenu.map((label) => (
        <li key={label}>
          <button type="button" className="flex h-[26px] w-full items-center justify-between pl-[11px] pr-4">
            {label}
            <svg viewBox="0 0 8 4" className="h-1 w-2"><path d="M0 0h8L4 4z" fill="#000" /></svg>
          </button>
        </li>
      ))}
    </ul>
  </aside>
);

const VillageCard = () => (
  <section className="flex w-[382px] flex-col items-center border-10 border-t-[#00aaff] border-r-[#0073ab] border-b-[#0073ab] border-l-[#00aaff] bg-[repeating-linear-gradient(135deg,#fff_0px,#fff_5px,#f7f7f7_5px,#f7f7f7_6px)] pt-[29px] text-center font-['DejaVu_Sans',sans-serif] text-[#663333] shadow-[0_0_20px_rgba(0,0,0,0.08)]">
    <VillageEmblem />
    <h2 className="mt-1.5 text-[15px] font-bold leading-[26px]">DESA SEPANG KELOD</h2>
    <p className="text-sm leading-[25px]">KECAMATAN BUSUNGBIU</p>
    <p className="text-sm leading-[25px]">KAB. BULELENG</p>
    <p className="text-sm leading-[25px]">PROVINSI BALI</p>
    {villageFacts.map((fact) => (
      <p key={fact} className="text-xs leading-[23px]">{fact}</p>
    ))}
    <button type="button" className="mt-3 rounded-[3px] border-2 border-t-[#e6e3dc] border-r-[#808080] border-b-[#404040] border-l-[#e6e3dc] bg-[#d4d0c8] px-1 text-xs leading-[18px] text-black">
      Edit
    </button>
  </section>
);

const Scrollbar = () => (
  <div className="flex w-[15px] shrink-0 flex-col items-center bg-[#fcfcfc] pb-1 pt-1.5" aria-hidden="true">
    <svg viewBox="0 0 10 7" className="h-[7px] w-2.5"><path d="M5 0l5 7H0z" fill="#8b8b8b" /></svg>
    <div className="mb-1.5 mt-[23px] w-[9px] flex-1 rounded-full bg-[#8b8b8b]" />
    <svg viewBox="0 0 10 7" className="h-[7px] w-2.5"><path d="M0 0h10L5 7z" fill="#8b8b8b" /></svg>
  </div>
);

/* ---------- Taskbar ---------- */

const Taskbar = () => (
  <footer className="flex h-12 shrink-0 items-center border-t border-[#bcbcbc] bg-[#eeeeee] text-xs text-[#222]">
    <div className="w-[250px] shrink-0 pl-5">
      <button type="button" aria-label="Weather" className="relative block">
        <WeatherIcon />
        <span className="absolute -top-1.5 left-2.5 flex h-4 w-4 items-center justify-center rounded-full bg-[#c42b1c] text-[11px] text-white">2</span>
      </button>
    </div>
    <button type="button" aria-label="Start" className="flex h-11 w-11 shrink-0 items-center justify-center"><StartIcon /></button>
    <label className="mx-[3px] flex h-8 w-[218px] items-center gap-2.5 rounded-full border border-[#d6d6d6] bg-[#fafafa] pl-2.5">
      <Search size={16} strokeWidth={2.25} />
      <input type="search" aria-label="Search" placeholder="Search" className="w-full min-w-0 bg-transparent text-[13px] outline-none placeholder:text-[#666]" />
    </label>
    {taskbarApps.map((app) => (
      <button key={app.name} type="button" aria-label={app.name} className="relative flex h-11 w-11 shrink-0 items-center justify-center">
        {app.icon}
        {app.running && <span className="absolute bottom-0.5 h-[3px] w-1.5 rounded-full bg-[#8a8a8a]" />}
      </button>
    ))}
    <button type="button" aria-label="Chrome" className="relative flex h-11 w-11 shrink-0 items-center justify-center">
      <ChromeIcon />
      <span className="absolute right-1 top-1 h-4 w-4 overflow-hidden rounded-full bg-[#171313]">
        <svg viewBox="0 0 16 16" className="h-4 w-4">
          <ellipse cx="8" cy="6.500" rx="2.500" ry="3.500" fill="#b98f7e" />
          <path d="M5 6c0-4 6-4 6 0-2-2-4-2-6 0z" fill="#2c1c18" />
          <path d="M6 11h4l1 4H5z" fill="#6b4c44" />
        </svg>
      </span>
      <span className="absolute bottom-0.5 h-[3px] w-1.5 rounded-full bg-[#8a8a8a]" />
    </button>
    <button type="button" aria-label="Chrome, profile P" className="relative flex h-11 w-11 shrink-0 items-center justify-center">
      <span className="flex h-10 w-9 items-center justify-center rounded bg-[#fafafa]"><ChromeIcon /></span>
      <span className="absolute right-1 top-1 flex h-4 w-4 items-center justify-center rounded-full bg-[#689f38] text-[10px] text-white">P</span>
      <span className="absolute bottom-0.5 h-[3px] w-4 rounded-full bg-[#0078d4]" />
    </button>
    <div className="ml-auto flex items-center pr-5">
      <button type="button" aria-label="Show hidden icons" className="mr-4"><ChevronUp size={16} /></button>
      <button type="button" aria-label="Updates" className="mr-3.5"><SyncIcon /></button>
      <button type="button" aria-label="Network, volume and battery" className="mr-5 flex items-center gap-1.5">
        <WifiIcon />
        <VolumeIcon />
        <BatteryIcon />
      </button>
      <button type="button" className="mr-2 text-right text-[11px] leading-4">
        <time dateTime="2026-01-30T10:41">
          10.41
          <br />
          30/01/2026
        </time>
      </button>
      <button type="button" aria-label="Notifications"><BellIcon /></button>
    </div>
  </footer>
);

const App = () => {
  return (
    <div className="flex min-h-screen flex-col bg-[#c9e8bf] font-['Open_Sans',sans-serif]">
      <TabStrip />
      <Toolbar />
      <BookmarksBar />
      <SiteHeader />
      <MainMenu />
      <Shortcuts />
      <div className="flex flex-1 bg-[#cfe7f3]">
        <Sidebar />
        <main className="flex flex-1 justify-center overflow-hidden">
          <VillageCard />
        </main>
        <Scrollbar />
      </div>
      <Taskbar />
    </div>
  );
};

export default App;
